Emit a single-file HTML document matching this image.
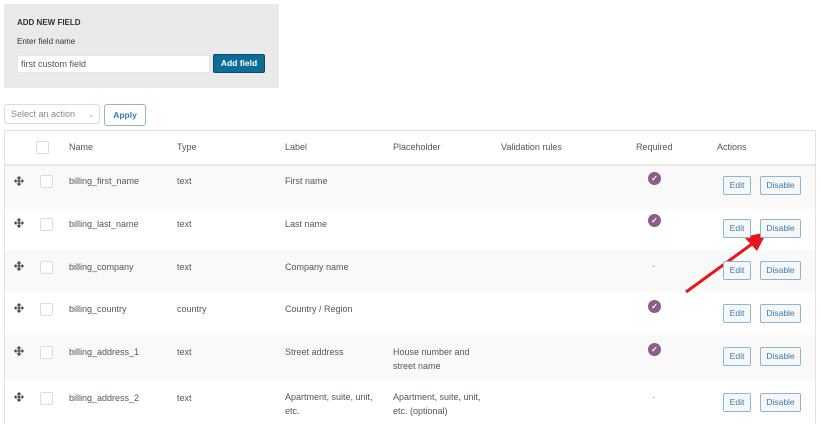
<!DOCTYPE html>
<html><head><style>
body{margin:0;width:820px;height:424px;background:#fff;font-family:"Liberation Sans",sans-serif;font-size:9px;color:#50575e;position:relative;overflow:hidden}
.a{position:absolute}
.box{left:4px;top:4px;width:275px;height:84px;background:#eaeaea}
.btn{position:absolute;border:1px solid #8fb5d3;border-radius:2px;color:#3a7ab0;background:#f6f7f7;font-size:8.5px;text-align:center;box-sizing:border-box}
.row{position:absolute;left:5px;width:810px}
.cb{position:absolute;width:11px;height:11px;border:1px solid #ddd;background:#fff;border-radius:2px}
.chk{position:absolute;width:13px;height:13px;border-radius:50%;background:#8c5c8a;color:#fff;font-size:8px;line-height:13px;text-align:center;font-weight:bold}
</style></head><body>
<div class="a box"></div>
<div class="a" style="left:17px;top:18px;font-size:8px;font-weight:bold;color:#333">ADD NEW FIELD</div>
<div class="a" style="left:17px;top:37px;font-size:8px;color:#333">Enter field name</div>
<div class="a" style="left:17px;top:55px;width:193px;height:18px;background:#fff;border:1px solid #e5e5e5;box-sizing:border-box;padding-left:3px;line-height:16px;color:#555">first custom field</div>
<div class="a" style="left:213px;top:54px;width:52px;height:19px;background:#0e6d95;border:1px solid #0a4c6a;border-radius:2px;box-sizing:border-box;color:#fff;font-weight:bold;font-size:8.5px;line-height:17px;text-align:center">Add field</div>
<div class="a" style="left:4px;top:104px;width:96px;height:20px;border:1px solid #ddd;border-radius:3px;box-sizing:border-box;padding-left:6px;line-height:18px;color:#888">Select an action <span style="margin-left:10px;color:#bbb">⌄</span></div>
<div class="btn" style="left:104px;top:104px;width:42px;height:22px;line-height:20px;font-weight:bold;border-radius:3px;background:#fff">Apply</div>
<div class="a" style="left:4px;top:130px;width:812px;height:294px;border:1px solid #e3e3e3;border-bottom:none;box-sizing:border-box"></div>
<div class="cb" style="left:36px;top:141px"></div>
<div class="a" style="top:142px;left:69px">Name</div><div class="a" style="top:142px;left:177px">Type</div><div class="a" style="top:142px;left:285px">Label</div><div class="a" style="top:142px;left:393px">Placeholder</div><div class="a" style="top:142px;left:501px">Validation rules</div><div class="a" style="top:142px;left:636px">Required</div><div class="a" style="top:142px;left:717px">Actions</div>

<div class="row" style="top:164px;height:43px;background:#f9f9f9;border-top:2px solid #e8e8e8"></div>
<div class="row" style="top:250px;height:42px;background:#f9f9f9"></div>
<div class="row" style="top:335px;height:45px;background:#f9f9f9"></div>

<svg class="a" style="left:0;top:0" width="820" height="424">
<g fill="#3c434a">
<g id="m"><path d="M19 176l-2.5 2.5h1.8v2h-2v-1.8L14 181l2.3 2.3v-1.8h2v2h-1.8L19 186l2.5-2.5h-1.8v-2h2v1.8L24 181l-2.3-2.3v1.8h-2v-2h1.8z"/></g>
<use href="#m" y="42"/><use href="#m" y="85"/><use href="#m" y="127"/><use href="#m" y="170"/><use href="#m" y="216"/>
</g>
<path d="M686 292L752 244" stroke="#e8161b" stroke-width="3"/>
<path d="M767 232L744 237L757 251Z" fill="#e8161b"/>
</svg>
<div class="cb" style="left:40px;top:175px"></div><div class="cb" style="left:40px;top:218px"></div><div class="cb" style="left:40px;top:261px"></div><div class="cb" style="left:40px;top:303px"></div><div class="cb" style="left:40px;top:346px"></div><div class="cb" style="left:40px;top:392px"></div>

<div class="a" style="left:69px;top:176px">billing_first_name</div><div class="a" style="left:177px;top:176px">text</div><div class="a" style="left:285px;top:176px">First name</div>
<div class="a" style="left:69px;top:219px">billing_last_name</div><div class="a" style="left:177px;top:219px">text</div><div class="a" style="left:285px;top:219px">Last name</div>
<div class="a" style="left:69px;top:262px">billing_company</div><div class="a" style="left:177px;top:262px">text</div><div class="a" style="left:285px;top:262px">Company name</div>
<div class="a" style="left:69px;top:304px">billing_country</div><div class="a" style="left:177px;top:304px">country</div><div class="a" style="left:285px;top:304px">Country / Region</div>
<div class="a" style="left:69px;top:347px">billing_address_1</div><div class="a" style="left:177px;top:347px">text</div><div class="a" style="left:285px;top:347px">Street address</div><div class="a" style="left:393px;top:345px;line-height:14px">House number and<br>street name</div>
<div class="a" style="left:69px;top:393px">billing_address_2</div><div class="a" style="left:177px;top:393px">text</div><div class="a" style="left:285px;top:390px;line-height:14px">Apartment, suite, unit,<br>etc.</div><div class="a" style="left:393px;top:390px;line-height:14px">Apartment, suite, unit,<br>etc. (optional)</div>

<div class="chk" style="left:648px;top:172px">✓</div><div class="chk" style="left:648px;top:214px">✓</div><div class="a" style="left:652px;top:261px;color:#999">-</div><div class="chk" style="left:648px;top:300px">✓</div><div class="chk" style="left:648px;top:343px">✓</div><div class="a" style="left:652px;top:392px;color:#999">-</div>

<div class="btn" style="left:723px;top:176px;width:28px;height:19px;line-height:17px">Edit</div><div class="btn" style="left:760px;top:176px;width:41px;height:19px;line-height:17px">Disable</div>
<div class="btn" style="left:723px;top:219px;width:28px;height:19px;line-height:17px">Edit</div><div class="btn" style="left:760px;top:219px;width:41px;height:19px;line-height:17px">Disable</div>
<div class="btn" style="left:723px;top:261px;width:28px;height:19px;line-height:17px">Edit</div><div class="btn" style="left:760px;top:261px;width:41px;height:19px;line-height:17px">Disable</div>
<div class="btn" style="left:723px;top:304px;width:28px;height:19px;line-height:17px">Edit</div><div class="btn" style="left:760px;top:304px;width:41px;height:19px;line-height:17px">Disable</div>
<div class="btn" style="left:723px;top:347px;width:28px;height:19px;line-height:17px">Edit</div><div class="btn" style="left:760px;top:347px;width:41px;height:19px;line-height:17px">Disable</div>
<div class="btn" style="left:723px;top:393px;width:28px;height:19px;line-height:17px">Edit</div><div class="btn" style="left:760px;top:393px;width:41px;height:19px;line-height:17px">Disable</div>
</body></html>
